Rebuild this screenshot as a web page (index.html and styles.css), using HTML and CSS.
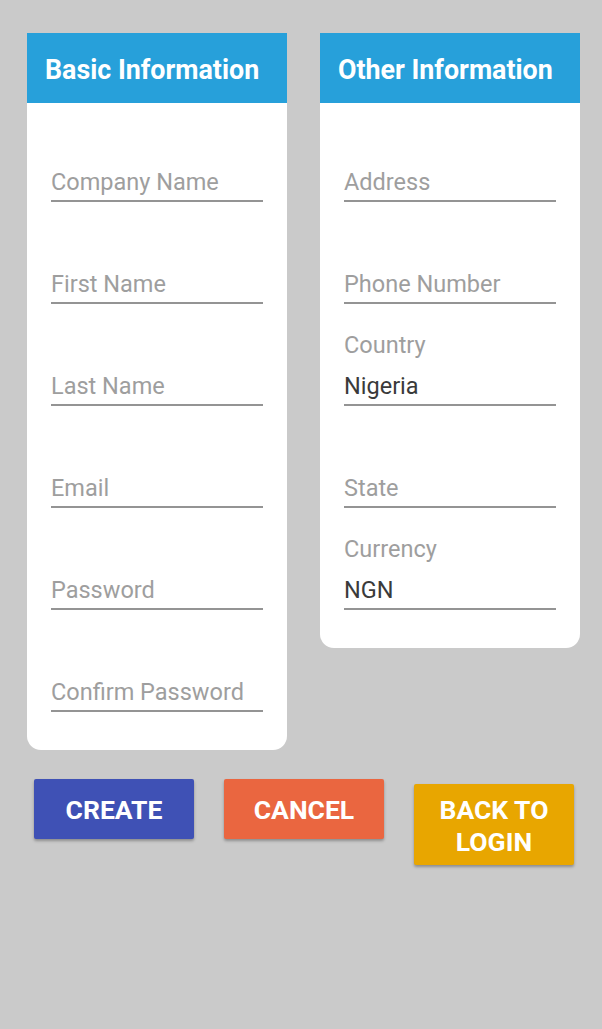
FILE: index.html
```html
<!DOCTYPE html>
<html>
<head>
<meta charset="utf-8">
<link rel="stylesheet" href="styles.css">
</head>
<body>
<div class="page">
  <div class="cards">
    <section class="card">
      <div class="card-head">Basic Information</div>
      <div class="card-body">
        <div class="field"><span class="ph">Company Name</span></div>
        <div class="field"><span class="ph">First Name</span></div>
        <div class="field"><span class="ph">Last Name</span></div>
        <div class="field"><span class="ph">Email</span></div>
        <div class="field"><span class="ph">Password</span></div>
        <div class="field"><span class="ph">Confirm Password</span></div>
      </div>
    </section>
    <section class="card">
      <div class="card-head">Other Information</div>
      <div class="card-body">
        <div class="field"><span class="ph">Address</span></div>
        <div class="field"><span class="ph">Phone Number</span></div>
        <div class="field"><span class="label">Country</span><span class="value">Nigeria</span></div>
        <div class="field"><span class="ph">State</span></div>
        <div class="field"><span class="label">Currency</span><span class="value">NGN</span></div>
      </div>
    </section>
  </div>
  <div class="actions">
    <button class="btn btn-create">CREATE</button>
    <button class="btn btn-cancel">CANCEL</button>
    <button class="btn btn-back">BACK TO<br>LOGIN</button>
  </div>
</div>
</body>
</html>
```

FILE: styles.css
```css
html, body {
  margin: 0;
  padding: 0;
  background: #cacaca;
  font-family: Roboto, "Liberation Sans", sans-serif;
}
.page {
  width: 602px;
  height: 1029px;
  box-sizing: border-box;
  padding: 33px 22px 0 27px;
}
.cards {
  display: flex;
  align-items: flex-start;
  gap: 33px;
}
.card {
  width: 260px;
  background: #ffffff;
  border-radius: 0 0 14px 14px;
}
.card-head {
  height: 70px;
  box-sizing: border-box;
  background: #27a0da;
  color: #ffffff;
  font-size: 26.8px;
  font-weight: 700;
  display: flex;
  align-items: center;
  padding: 3px 0 0 18px;
}
.card-body {
  display: flex;
  flex-direction: column;
  gap: 4px;
  padding: 1px 24px 38px 24px;
}
.field {
  height: 98px;
  box-sizing: border-box;
  border-bottom: 2px solid #949494;
  display: flex;
  flex-direction: column;
  justify-content: flex-end;
  padding-bottom: 4px;
  font-size: 23.5px;
  line-height: 28px;
}
.ph, .label {
  color: #9e9e9e;
}
.label {
  margin-bottom: 13px;
}
.value {
  color: #3a3a3a;
}
.actions {
  display: flex;
  align-items: flex-start;
  gap: 30px;
  margin-top: 29px;
  padding-left: 7px;
}
.btn {
  width: 160px;
  min-height: 60px;
  border: none;
  border-radius: 2px;
  color: #ffffff;
  font-family: Roboto, "Liberation Sans", sans-serif;
  font-size: 26.5px;
  font-weight: 700;
  line-height: 32px;
  padding: 10px 0 9px;
  box-shadow: 0 2px 3px rgba(0, 0, 0, 0.3);
}
.btn-create { background: #3f51b5; }
.btn-cancel { background: #ea6640; }
.btn-back {
  background: #e8a600;
  margin-top: 5px;
  min-height: 81px;
  padding: 10px 0 7px;
}
```
